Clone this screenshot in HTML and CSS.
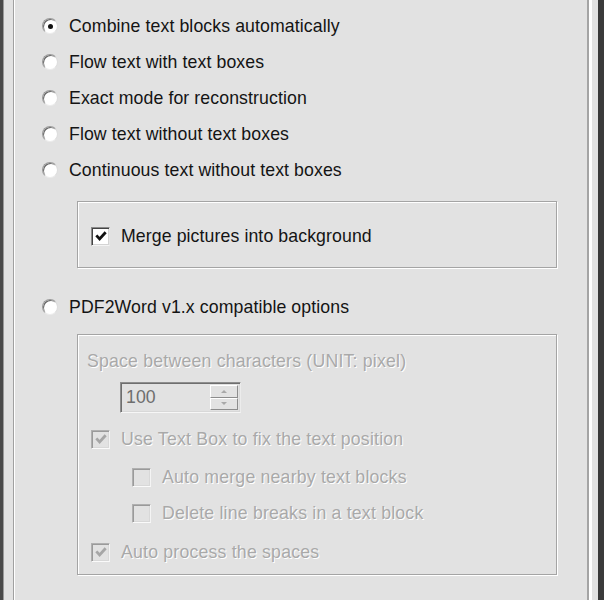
FILE: index.html
```html
<!DOCTYPE html>
<html>
<head>
<meta charset="utf-8">
<link rel="stylesheet" href="styles.css">
</head>
<body>
<div class="window">
  <div class="group">
    <div class="row radio-row"><span class="radio checked"></span><span class="label">Combine text blocks automatically</span></div>
    <div class="row radio-row"><span class="radio"></span><span class="label">Flow text with text boxes</span></div>
    <div class="row radio-row"><span class="radio"></span><span class="label">Exact mode for reconstruction</span></div>
    <div class="row radio-row"><span class="radio"></span><span class="label">Flow text without text boxes</span></div>
    <div class="row radio-row"><span class="radio"></span><span class="label">Continuous text without text boxes</span></div>

    <div class="box merge-box">
      <div class="row check-row">
        <span class="check checked">
          <svg viewBox="0 0 12 12" width="14" height="14"><path d="M2 5.5 L4.8 8.5 L10 2.8" fill="none" stroke="#111" stroke-width="2.4"/></svg>
        </span>
        <span class="label">Merge pictures into background</span>
      </div>
    </div>

    <div class="row radio-row pdf-row"><span class="radio"></span><span class="label">PDF2Word v1.x compatible options</span></div>

    <div class="box disabled-box">
      <div class="row text-row"><span class="label dis">Space between characters (UNIT: pixel)</span></div>
      <div class="spin">
        <span class="spin-value">100</span>
        <span class="spin-btns">
          <span class="spin-btn"><span class="arr up"></span></span>
          <span class="spin-btn"><span class="arr down"></span></span>
        </span>
      </div>
      <div class="row check-row lvl1 r-use">
        <span class="check dis-check">
          <svg viewBox="0 0 12 12" width="14" height="14"><path d="M2 5.5 L4.8 8.5 L10 2.8" fill="none" stroke="#a6a6a6" stroke-width="2.4"/></svg>
        </span>
        <span class="label dis">Use Text Box to fix the text position</span>
      </div>
      <div class="row check-row lvl2 r-merge">
        <span class="check dis-check"></span>
        <span class="label dis">Auto merge nearby text blocks</span>
      </div>
      <div class="row check-row lvl2">
        <span class="check dis-check"></span>
        <span class="label dis">Delete line breaks in a text block</span>
      </div>
      <div class="row check-row lvl1 r-auto">
        <span class="check dis-check">
          <svg viewBox="0 0 12 12" width="14" height="14"><path d="M2 5.5 L4.8 8.5 L10 2.8" fill="none" stroke="#a6a6a6" stroke-width="2.4"/></svg>
        </span>
        <span class="label dis">Auto process the spaces</span>
      </div>
    </div>
  </div>
</div>
</body>
</html>
```

FILE: styles.css
```css
* { box-sizing: border-box; }
html, body { margin: 0; padding: 0; }
body {
  background: #e2e2e2;
  font-family: "Liberation Sans", Arial, sans-serif;
  font-size: 17.7px;
  letter-spacing: 0.1px;
  color: #141414;
  width: 604px;
  height: 600px;
  overflow: hidden;
}
.window {
  width: 604px;
  height: 600px;
  border-left: 3px solid #4a4a4a;
  border-right: 6px solid #3a3a3a;
  box-shadow: inset 1px 0 #9a9a9a;
  padding-left: 10px;
  padding-right: 9px;
  background: #e2e2e2;
}
.group {
  height: 600px;
  border-left: 1px solid #a0a0a0;
  border-right: 2px solid #a4a4a4;
  box-shadow: inset 1px 0 #fff, 2px 0 #fff, 3px 0 #fff;
  padding-top: 8px;
  padding-left: 28px;
}
.row {
  display: flex;
  align-items: center;
  height: 36px;
  white-space: nowrap;
}
.radio {
  width: 16px;
  height: 16px;
  border-radius: 50%;
  background: #fff;
  border: 1.5px solid #9a9a9a;
  border-right-color: #dcdcdc;
  border-bottom-color: #ececec;
  box-shadow: inset 1px 1px #666;
  display: inline-flex;
  align-items: center;
  justify-content: center;
  margin-right: 11px;
  flex: none;
}
.radio.checked::after {
  content: "";
  width: 5px;
  height: 5px;
  border-radius: 50%;
  background: #111;
}
.label { display: inline-block; }
.box {
  border: 1px solid #a4a4a4;
  box-shadow: inset 1px 1px #fff, 1px 1px #fff;
  margin-left: 35px;
  width: 480px;
}
.merge-box {
  margin-top: 13px;
  height: 67px;
  padding-top: 16px;
  padding-left: 13px;
}
.check {
  width: 19px;
  height: 19px;
  border: 1px solid #8a8a8a;
  border-right-color: #e6e6e6;
  border-bottom-color: #f4f4f4;
  box-shadow: inset 1px 1px #444, inset -1px -1px #d4d4d4;
  background: #fff;
  display: inline-flex;
  align-items: center;
  justify-content: center;
  margin-right: 11px;
  flex: none;
}
.check.dis-check {
  background: #e2e2e2;
  box-shadow: inset 1px 1px #9a9a9a, inset -1px -1px #d8d8d8;
  border-color: #b0b0b0;
  border-right-color: #f4f4f4;
  border-bottom-color: #fafafa;
}
.pdf-row { margin-top: 21px; }
.disabled-box {
  margin-top: 9px;
  height: 241px;
  padding-top: 8px;
  padding-left: 9px;
}
.dis {
  color: #a9a9a9;
  text-shadow: 1px 1px 0 #fff;
  letter-spacing: 0.2px;
}
.spin {
  margin-top: 3px;
  margin-left: 33px;
  width: 121px;
  height: 31px;
  display: flex;
  align-items: center;
  border: 1px solid #8e8e8e;
  border-right-color: #ececec;
  border-bottom-color: #f6f6f6;
  box-shadow: inset 1px 1px #6e6e6e, inset -1px -1px #d8d8d8;
  padding: 2px;
}
.spin-value {
  flex: 1;
  padding-left: 3px;
  color: #6e6e6e;
}
.spin-btns {
  display: flex;
  flex-direction: column;
  width: 28px;
  height: 25px;
}
.spin-btn {
  flex: 1;
  display: flex;
  align-items: center;
  justify-content: center;
  background: #e2e2e2;
  border-top: 1px solid #fff;
  border-left: 1px solid #fff;
  border-right: 1px solid #8c8c8c;
  border-bottom: 1px solid #8c8c8c;
}
.arr {
  width: 0;
  height: 0;
  border-left: 3px solid transparent;
  border-right: 3px solid transparent;
}
.arr.up { border-bottom: 3px solid #a8a8a8; }
.arr.down { border-top: 3px solid #a8a8a8; }
.lvl1 { padding-left: 4px; }
.lvl2 { padding-left: 45px; }
.r-use { margin-top: 8px; }
.r-merge { margin-top: 2px; }
.r-auto { margin-top: 3px; }
```
